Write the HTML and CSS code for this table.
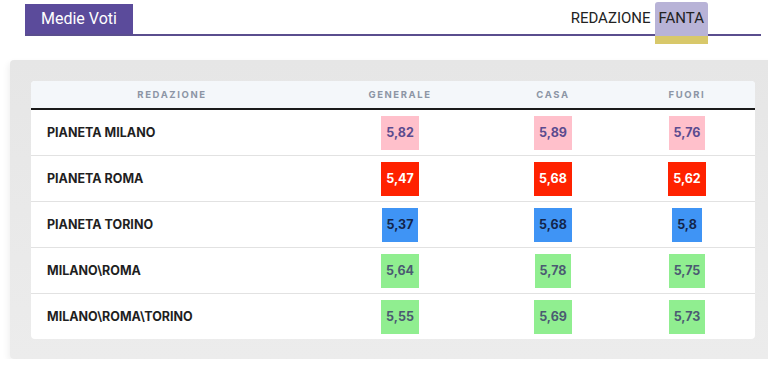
FILE: index.html
```html
<!DOCTYPE html>
<html lang="it">
<head>
<meta charset="utf-8">
<title>Medie Voti</title>
<link rel="stylesheet" href="styles.css">
</head>
<body>
<header class="topbar">
  <div class="tab-title">Medie Voti</div>
  <nav class="nav">
    <span class="nav-item">REDAZIONE</span>
    <span class="nav-item active">FANTA</span>
  </nav>
</header>
<section class="panel">
  <div class="card">
    <div class="row head">
      <div class="cell name">REDAZIONE</div>
      <div class="cell">GENERALE</div>
      <div class="cell">CASA</div>
      <div class="cell">FUORI</div>
    </div>
    <div class="row">
      <div class="cell name">PIANETA MILANO</div>
      <div class="cell"><span class="badge pink">5,82</span></div>
      <div class="cell"><span class="badge pink">5,89</span></div>
      <div class="cell"><span class="badge pink">5,76</span></div>
    </div>
    <div class="row">
      <div class="cell name">PIANETA ROMA</div>
      <div class="cell"><span class="badge red">5,47</span></div>
      <div class="cell"><span class="badge red">5,68</span></div>
      <div class="cell"><span class="badge red">5,62</span></div>
    </div>
    <div class="row">
      <div class="cell name">PIANETA TORINO</div>
      <div class="cell"><span class="badge blue">5,37</span></div>
      <div class="cell"><span class="badge blue">5,68</span></div>
      <div class="cell"><span class="badge blue">5,8</span></div>
    </div>
    <div class="row">
      <div class="cell name">MILANO\ROMA</div>
      <div class="cell"><span class="badge green">5,64</span></div>
      <div class="cell"><span class="badge green">5,78</span></div>
      <div class="cell"><span class="badge green">5,75</span></div>
    </div>
    <div class="row last">
      <div class="cell name">MILANO\ROMA\TORINO</div>
      <div class="cell"><span class="badge green">5,55</span></div>
      <div class="cell"><span class="badge green">5,69</span></div>
      <div class="cell"><span class="badge green">5,73</span></div>
    </div>
  </div>
</section>
</body>
</html>
```
FILE: styles.css
```css
html { overflow: hidden; }
body {
  margin: 0;
  background: #ffffff;
  font-family: Roboto, "Liberation Sans", sans-serif;
}
.topbar {
  display: flex;
  align-items: flex-end;
  justify-content: space-between;
  margin: 0 7px 0 25px;
  padding-top: 2px;
  height: 32px;
  border-bottom: 2px solid #5a4e8e;
}
.tab-title {
  background: #5b4b9b;
  color: #ffffff;
  font-size: 16px;
  height: 30px;
  line-height: 30px;
  padding: 0 16px;
  white-space: nowrap;
}
.nav {
  display: flex;
  align-items: flex-end;
  margin-right: 53px;
}
.nav-item {
  font-size: 15px;
  color: #222222;
  height: 32px;
  line-height: 32px;
  padding: 0 4px;
  white-space: nowrap;
}
.nav-item.active {
  position: relative;
  background: #b8b3d7;
  border-radius: 3px 3px 0 0;
  height: 34px;
  line-height: 32px;
  margin-bottom: -2px;
  padding: 0 4px;
}
.nav-item.active::after {
  content: "";
  position: absolute;
  left: 0;
  right: 0;
  top: 100%;
  height: 8px;
  background: #d8c86a;
}
.panel {
  margin: 24px -20px 0 10px;
  padding: 21px 21px 20px 21px;
  background: linear-gradient(#e6e6e6, #ececec);
  border-radius: 4px;
  box-shadow: -2px 3px 6px rgba(0,0,0,0.06);
}
.card {
  width: 724px;
  background: #ffffff;
  border-radius: 4px;
  overflow: hidden;
  font-family: Inter, "Noto Sans", sans-serif;
}
.row {
  display: grid;
  grid-template-columns: 282px 174px 132px 136px;
  height: 45px;
  border-bottom: 1px solid #e2e2e2;
  align-items: center;
}
.row.last { border-bottom: none; }
.row.head {
  height: 27px;
  background: #f4f7fa;
  border-bottom: 2px solid #1a1a1a;
}
.cell {
  text-align: center;
}
.head .cell {
  font-size: 9.5px;
  font-weight: 700;
  letter-spacing: 1.6px;
  color: #8c95a5;
}
.row .cell.name {
  text-align: left;
  padding-left: 16px;
  font-size: 12.5px;
  font-weight: 700;
  color: #1f1f1f;
}
.head .cell.name {
  text-align: center;
  padding-left: 0;
  font-size: 9.5px;
  color: #8c95a5;
}
.badge {
  display: inline-block;
  height: 34px;
  line-height: 34px;
  padding: 0 5px;
  font-size: 12.5px;
  font-weight: 700;
  vertical-align: middle;
}
.pink { background: #ffc0cb; color: #5b4b8f; }
.red { background: #ff2200; color: #ffffff; }
.blue { background: #3f94f5; color: #13254a; }
.green { background: #90ee90; color: #4b5a72; }
```
